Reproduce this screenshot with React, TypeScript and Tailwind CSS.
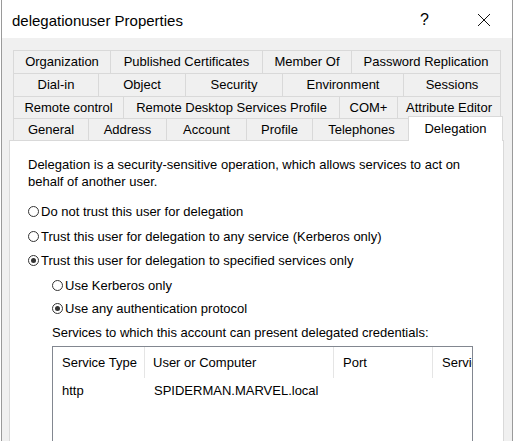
import type { ReactNode } from 'react'

const font = { fontFamily: '"Liberation Sans", Arial, sans-serif' }

type Tab = { label: string; w: string }

const rows: Tab[][] = [
  [
    { label: 'Organization', w: 'w-[97px]' },
    { label: 'Published Certificates', w: 'w-[152px]' },
    { label: 'Member Of', w: 'w-[89px]' },
    { label: 'Password Replication', w: 'w-[150px]' },
  ],
  [
    { label: 'Dial-in', w: 'w-[85px]' },
    { label: 'Object', w: 'w-[87px]' },
    { label: 'Security', w: 'w-[97px]' },
    { label: 'Environment', w: 'w-[121px]' },
    { label: 'Sessions', w: 'w-[98px]' },
  ],
  [
    { label: 'Remote control', w: 'w-[110px]' },
    { label: 'Remote Desktop Services Profile', w: 'w-[216px]' },
    { label: 'COM+', w: 'w-[58px]' },
    { label: 'Attribute Editor', w: 'w-[104px]' },
  ],
]

const lastRow: Tab[] = [
  { label: 'General', w: 'w-[75px]' },
  { label: 'Address', w: 'w-[78px]' },
  { label: 'Account', w: 'w-[80px]' },
  { label: 'Profile', w: 'w-[66px]' },
  { label: 'Telephones', w: 'w-[98px]' },
]

function TabCell({ tab, last }: { tab: Tab; last?: boolean }) {
  return (
    <div
      className={`${tab.w} h-full flex items-center justify-center border-t border-l border-[#d9d9d9] ${
        last ? 'border-r' : ''
      } whitespace-nowrap`}
    >
      {tab.label}
    </div>
  )
}

function Radio({ checked, children }: { checked?: boolean; children: ReactNode }) {
  return (
    <div className="flex items-center gap-[2px] h-[17px]">
      <span className="w-[11px] h-[11px] rounded-full border border-[#333333] bg-white flex items-center justify-center shrink-0">
        {checked && <span className="w-[5px] h-[5px] rounded-full bg-[#333333]" />}
      </span>
      <span>{children}</span>
    </div>
  )
}

export default function App() {
  return (
    <div className="w-[515px] h-[441px] bg-white overflow-hidden text-black" style={font}>
      <div className="ml-[1px] w-[512px] h-[441px] border-x border-[#9a9a9a] flex flex-col overflow-hidden">
        {/* title bar */}
        <div className="h-[38px] bg-white flex items-center pl-[10px] pt-[2px] shrink-0">
          <span className="text-[15px] leading-none">delegationuser Properties</span>
          <span className="ml-auto text-[16px] leading-none -mt-[1px]">?</span>
          <svg width="14" height="14" viewBox="0 0 14 14" className="ml-[48px] mr-[21px]">
            <path d="M1 1L13 13M13 1L1 13" stroke="#111" strokeWidth="1" fill="none" />
          </svg>
        </div>

        {/* body */}
        <div className="flex-1 bg-[#f0f0f0] pt-[12px] text-[13px]">
          <div className="ml-[11px]">
            {rows.map((row, i) => (
              <div key={i} className={`flex ${i < 2 ? 'h-[23px]' : 'h-[22px]'}`}>
                {row.map((t, j) => (
                  <TabCell key={t.label} tab={t} last={j === row.length - 1} />
                ))}
              </div>
            ))}
            <div className="flex items-start h-[22px]">
              {lastRow.map((t) => (
                <TabCell key={t.label} tab={t} />
              ))}
              <div className="relative z-10 -ml-[2px] -mt-[2px] w-[95px] h-[25px] bg-white border-t border-x border-[#d9d9d9] flex justify-center pt-[3px] leading-[17px]">
                Delegation
              </div>
            </div>
          </div>

          {/* page */}
          <div className="ml-[7px] w-[495px] h-[320px] bg-white border border-[#d9d9d9] leading-[17px]">
            <p className="pl-[18px] pt-[15px]">
              Delegation is a security-sensitive operation, which allows services to act on
              <br />
              behalf of another user.
            </p>
            <div className="pl-[18px] mt-[13px] flex flex-col">
              <Radio>Do not trust this user for delegation</Radio>
              <div className="mt-[8px]">
                <Radio>Trust this user for delegation to any service (Kerberos only)</Radio>
              </div>
              <div className="mt-[7px]">
                <Radio checked>Trust this user for delegation to specified services only</Radio>
              </div>
              <div className="ml-[24px] mt-[8px]">
                <Radio>Use Kerberos only</Radio>
              </div>
              <div className="ml-[24px] mt-[6px]">
                <Radio checked>Use any authentication protocol</Radio>
              </div>
            </div>
            <p className="ml-[42px] mt-[7px]">Services to which this account can present delegated credentials:</p>

            <div className="ml-[42px] mt-[5px] w-[421px] h-[120px] border border-[#828790] overflow-hidden">
              <div className="flex h-[31px] whitespace-nowrap">
                <div className="w-[92px] pl-[9px] flex items-center border-r border-[#e5e5e5]">Service Type</div>
                <div className="w-[189px] pl-[8px] flex items-center border-r border-[#e5e5e5]">User or Computer</div>
                <div className="w-[99px] pl-[9px] flex items-center border-r border-[#e5e5e5]">Port</div>
                <div className="flex-1 pl-[9px] flex items-center overflow-hidden">Service</div>
              </div>
              <div className="flex h-[24px] items-center whitespace-nowrap">
                <div className="w-[92px] pl-[9px]">http</div>
                <div className="w-[189px] pl-[9px]">SPIDERMAN.MARVEL.local</div>
              </div>
            </div>
          </div>
        </div>
      </div>
    </div>
  )
}
